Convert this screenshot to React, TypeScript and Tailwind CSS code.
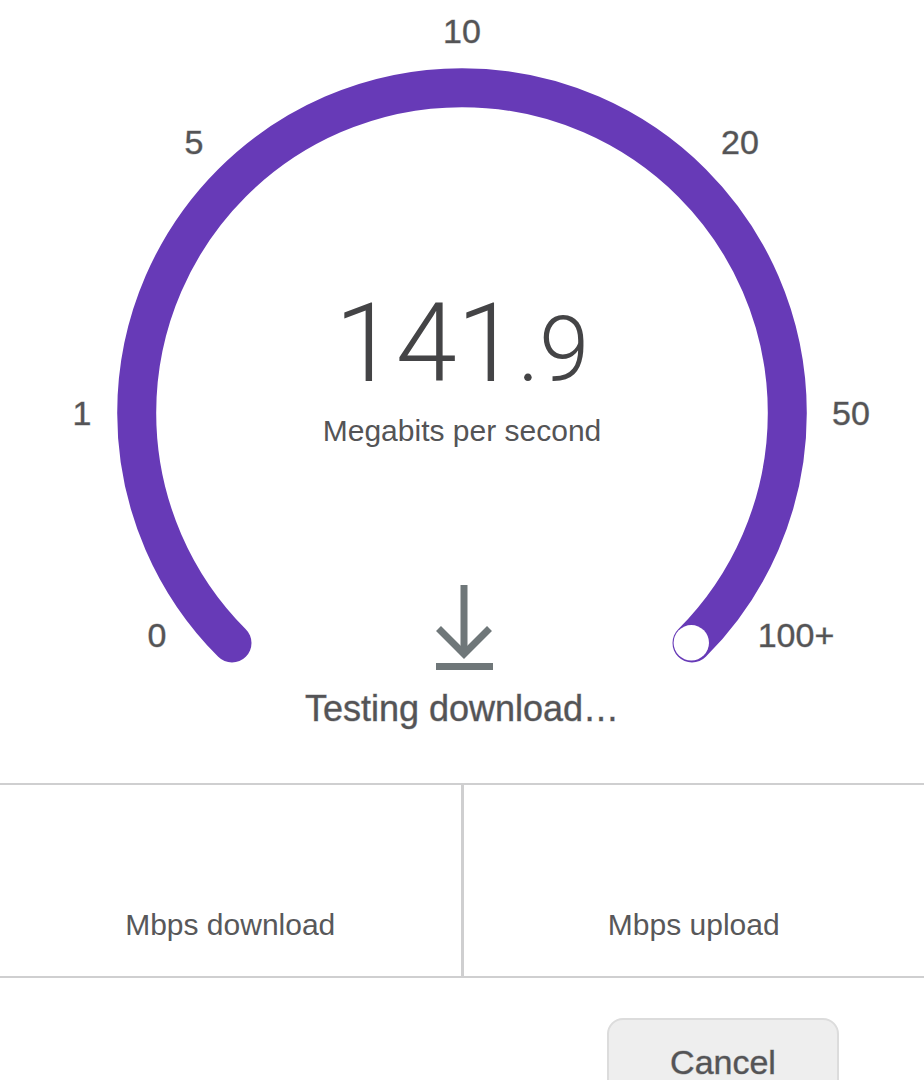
const ticks = [
  { label: '0', x: 157, y: 647 },
  { label: '1', x: 82, y: 425 },
  { label: '5', x: 194, y: 154 },
  { label: '10', x: 462, y: 43 },
  { label: '20', x: 740, y: 154 },
  { label: '50', x: 851, y: 425 },
  { label: '100+', x: 796, y: 647 },
];

function Gauge() {
  return (
    <svg
      viewBox="0 0 924 684"
      className="col-start-1 row-start-1 w-full"
      role="img"
      aria-label="Speed gauge from 0 to 100+ megabits per second"
    >
      <path
        d="M232 643 A325.3 325.3 0 1 1 692 643"
        fill="none"
        stroke="#673ab7"
        strokeWidth="39"
        strokeLinecap="round"
      />
      <circle cx="691.3" cy="642.8" r="17.7" fill="#fff" />
      {ticks.map((tick) => (
        <text
          key={tick.label}
          x={tick.x}
          y={tick.y}
          textAnchor="middle"
          className="fill-[#545456] stroke-[#545456]/40 text-[34px]"
        >
          {tick.label}
        </text>
      ))}
    </svg>
  );
}

function DownloadIcon() {
  return (
    <svg width="58" height="86" viewBox="0 0 58 86" fill="none" stroke="#6f7779" aria-hidden="true">
      <path d="M29 0V70" strokeWidth="7" />
      <path d="M3.5 43.500L29 69L54.500 43.500" strokeWidth="7" />
      <path d="M1 81.500H58" strokeWidth="7" />
    </svg>
  );
}

function Stat({ label }: { label: string }) {
  return (
    <div className="flex h-[191px] flex-1 items-end justify-center pb-[31px] text-[30px] leading-10 text-[#58585a]">
      {label}
    </div>
  );
}

export default function App() {
  return (
    <main className="min-h-screen bg-white font-['Liberation_Sans',Arial,sans-serif] text-[#545456]">
      <section className="mx-auto grid max-w-[924px]">
        <Gauge />
        <div className="col-start-1 row-start-1 flex flex-col items-center justify-between pt-[280px]">
          <div className="flex flex-col items-center">
            <p className="font-['Roboto',sans-serif] text-[110px] leading-[128px] font-light text-[#444446]">
              141<span className="text-[90px]">.9</span>
            </p>
            <p className="text-[30px] leading-8">Megabits per second</p>
          </div>
          <div className="pb-[13px] pl-1">
            <DownloadIcon />
          </div>
        </div>
      </section>
      <p className="mb-[49px] text-center text-[36px] leading-[50px] [-webkit-text-stroke:1px_rgb(84_84_86/0.4)]">
        Testing download…
      </p>
      <section className="flex divide-x-3 divide-[#cfcfd0] border-y-2 border-[#cfcfd0]">
        <Stat label="Mbps download" />
        <Stat label="Mbps upload" />
      </section>
      <div className="flex justify-end px-[85px] pt-10">
        <button
          type="button"
          className="h-[88px] w-[232px] rounded-2xl border-2 border-[#dcdcdc] bg-[#eeeeee] text-[34px] [-webkit-text-stroke:1px_rgb(84_84_86/0.4)]"
        >
          Cancel
        </button>
      </div>
    </main>
  );
}
